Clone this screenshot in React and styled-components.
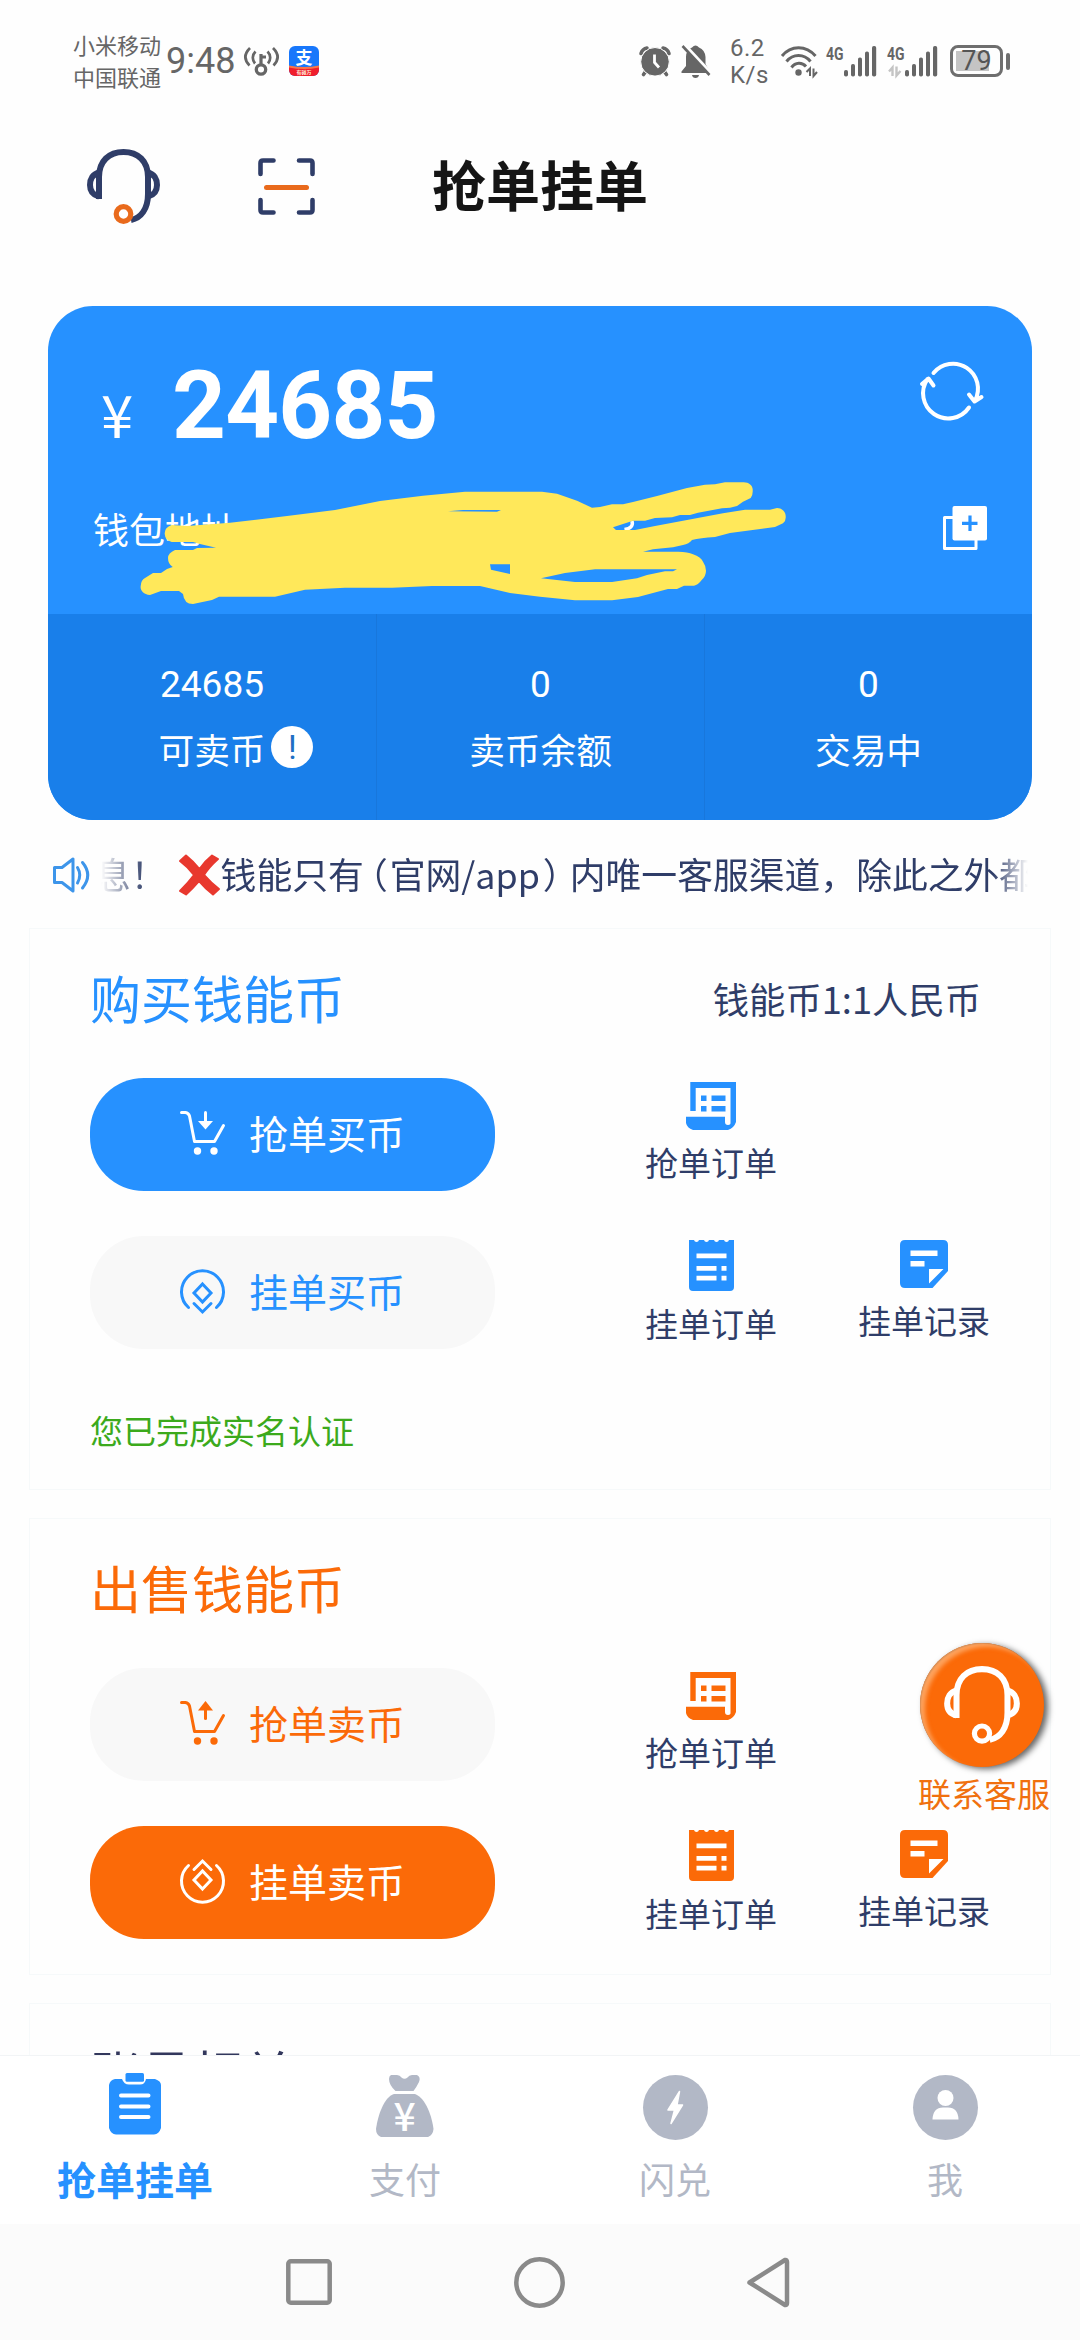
import React from 'react'
import styled, { createGlobalStyle } from 'styled-components'

const BLUE = '#2691ff'
const ORANGE = '#fb6a08'
const NAVY = '#2f3d68'
const GREY = '#b2b8c6'
const STATUS = '#666666'

const HeadsetIcon = ({ width, height, color, dot, stroke = 6 }) => (
  <svg width={width} height={height} viewBox="0 0 73 75" fill="none" stroke={color} strokeWidth={stroke}>
    <path d="M12 50V28C12 12 22 3 36.500 3S61 12 61 28V45C61 60 54 69 44 71" />
    <path d="M12 23.500C6 25 3 30 3 36S6 46 12 47.500" />
    <path d="M61 23.500C67 25 70 30 70 36S67 46 61 47.500" />
    <circle cx="36.500" cy="65" r="7.300" stroke={dot} strokeWidth={stroke - 0.8} />
  </svg>
)

const ScanIcon = () => (
  <svg width="57" height="57" viewBox="0 0 57 57" fill="none" strokeWidth="4.600" strokeLinecap="round">
    <path
      stroke={NAVY}
      strokeLinejoin="round"
      d="M2.500 16V5Q2.500 2.500 5 2.500H15.500M41 2.500H52Q54.500 2.500 54.500 5V16M54.500 42V52Q54.500 54.500 52 54.500H41M15.500 54.500H5Q2.500 54.500 2.500 52V42"
    />
    <path stroke="#e96a1c" strokeWidth="5" d="M8.500 29.500H48.500" />
  </svg>
)

const HotspotIcon = () => (
  <svg width="35" height="29" viewBox="0 0 35 29" fill="none" stroke={STATUS} strokeWidth="2.700">
    <circle cx="17" cy="22.500" r="4.700" strokeWidth="3.300" />
    <path d="M17 18V7M17 10H22" strokeWidth="3.200" />
    <path d="M11.500 4.500C8 8 8 13 11 16.500M6 1C0 7 0 13 5.500 18.500M23.500 4.500C27 8 27 13 24 16.500M29 1C35 7 35 13 29.500 18.500" />
  </svg>
)

const PayIcon = () => (
  <svg width="30" height="30" viewBox="0 0 30 30">
    <defs>
      <clipPath id="pay">
        <rect width="30" height="30" rx="6" />
      </clipPath>
    </defs>
    <g clipPath="url(#pay)">
      <rect width="30" height="30" fill="#1877fb" />
      <path d="M0 20Q15 23 30 20V30H0Z" fill="#f01e2c" />
      <path d="M0 19.500Q15 22.500 30 19.500V21.500Q15 24.500 0 21.500Z" fill="#f9764a" />
      <text x="15" y="17.500" textAnchor="middle" fontSize="17" fontWeight="700" fill="#fff">支</text>
      <text x="15" y="28" textAnchor="middle" fontSize="5" fontWeight="700" fill="#ffe9d8">有碰万</text>
    </g>
  </svg>
)

const AlarmIcon = () => (
  <svg width="32" height="31" viewBox="0 0 32 31">
    <g stroke={STATUS} strokeWidth="3.600" strokeLinecap="round" fill="none">
      <path d="M7 25L4.500 28.500M25 25L27.500 28.500" />
      <path d="M2 7.500C3 4.500 5 2.500 8 2M30 7.500C29 4.500 27 2.500 24 2" />
    </g>
    <circle cx="16" cy="15.800" r="14.300" fill={STATUS} stroke="#fff" strokeWidth="1" />
    <path d="M15.500 8.500V16.500L20 21.500" stroke="#fff" strokeWidth="2.800" fill="none" />
  </svg>
)

const BellOffIcon = () => (
  <svg width="30" height="33" viewBox="0 0 30 33">
    <path
      fill={STATUS}
      d="M11 2.500Q14.500 -1.500 18 2.500Q24 5 24.500 12V19L29 27V28H.5V26.500L5 21V12Q5 5 11 2.500ZM11 30H18Q17.500 33 14.500 33T11 30Z"
    />
    <path d="M3 0L30 29" stroke="#fff" strokeWidth="4.500" />
    <path d="M1.500 1L28.500 30" stroke={STATUS} strokeWidth="2.600" />
  </svg>
)

const WifiIcon = () => (
  <svg width="37" height="30" viewBox="0 0 37 30" fill="none" stroke={STATUS} strokeWidth="3">
    <path d="M1 10C10 -1 25 -1 34.500 10M5.500 15.500C12 7.500 23 7.500 29.500 15.500M10.500 21.500C14.500 16 21 16 25 20.500" />
    <circle cx="17.500" cy="26.500" r="3.200" fill={STATUS} stroke="none" />
    <path d="M29 30V22.500L25.500 26M32.500 22.500V30L36 26" strokeWidth="2" />
  </svg>
)

const SignalIcon = ({ idle }) => (
  <svg width="51" height="31" viewBox="0 0 51 31" fill={STATUS}>
    <text x="0" y="14" fontSize="18.500" fontWeight="700" textLength="17.500" lengthAdjust="spacingAndGlyphs" fontFamily="Roboto">4G</text>
    <rect x="18" y="24" width="4" height="6.500" rx="1.800" />
    <rect x="25" y="18" width="4" height="12.500" rx="1.800" />
    <rect x="32" y="11.500" width="4" height="19" rx="1.800" />
    <rect x="39" y="5.500" width="4" height="25" rx="1.800" />
    <rect x="46" y="0" width="4.200" height="30.500" rx="1.800" />
    {idle && <path d="M5.500 30V21.500L2 25.500M9.500 20.500V29.500L13.500 25" fill="none" stroke="#c4c4c4" strokeWidth="2.400" />}
  </svg>
)

const RefreshIcon = () => (
  <svg width="63" height="55" viewBox="0 0 63 55" fill="none" stroke="#fff" strokeWidth="4" strokeLinecap="round" strokeLinejoin="round">
    <path d="M13.500 10A25 25 0 0 1 55 37.500M49 31.500L54.500 38.500L61.500 34" />
    <path d="M49 44.500A25 25 0 0 1 7.500 16M2 21L8.500 15.500L13.500 22.500" />
  </svg>
)

const CopyIcon = () => (
  <svg width="44" height="44" viewBox="0 0 44 44">
    <path d="M10 11.500H1.500V42.500H33V34" fill="none" stroke="#fff" strokeWidth="3" strokeLinejoin="round" />
    <rect x="9.500" width="34.500" height="34.500" rx="2" fill="#fff" />
    <path d="M27 9.500V25M19 17.300H34.500" stroke={BLUE} strokeWidth="3.200" />
  </svg>
)

// hand drawn marker that covers the wallet address
const Marker = () => (
  <svg width="650" height="125" viewBox="140 480 650 125">
    <path d="M632 521Q634 528 624.500 529.500" fill="none" stroke="#fff" strokeWidth="3.500" />
    <path
      fill="#ffe85a"
      fillRule="evenodd"
      d="M171.700 525L187 526L230 522.700L287 516L335 510L380 501L423 495.700L465 491.700H542L557 493.700L577 500.700L592 507.700L600 507L612 504.300H623L633 502L657 496L687 488L705 484.700L715 484.300L725 482.300H743C749 482 753 486 752.700 490Q753 495 750.700 498L743 501.700L737 506L730 507.700L722 508.300L698 512.700L690 515H680L672 517.300L655 518L645 520.700H633L613 527.300L616 530H635L655 526L683 520.700L723 513.300L745 509.700H770L777 508C783 508 786 513 785.700 516.700Q786 521 783 523.300L775 527L747 530.700L730 533L715 537Q700 538 692 540Q689 544 683 545L673 547.300L653 549.300L643 551.700H678Q688 552 693 554.300Q701 557 703 561.700Q706 566 706 570.700Q706 576 701.700 580Q698 585 694 585.700H684L677 589H668L652 593.300L638 597L612 600.300H575L540 596.700L510 593L480 586H432L392 587.700H345L305 589.700L275 596.700H219L212 600L193 604Q184 604 183 594L179 591H161L150 595C143 594 140 590 140.700 586Q141 580 145 578L153 573H161L167 569L172.700 567Q168 564 168 558Q168 553 175 550H193L197 548L216 547.700L200 544L193 542H171.700Q165 540 164.700 533.700T171.700 525ZM448 511.300L463 510H501L497 511.700ZM490 564.300H510V574L491 569.700ZM541 578.300L565 573L595 569.300H677L673 571.300H665L647 575L637 578.300L612 582H575Z"
    />
  </svg>
)

const SpeakerIcon = () => (
  <svg width="39" height="36" viewBox="0 0 39 36" fill="none" stroke="#3d95ea" strokeWidth="3" strokeLinejoin="round">
    <path d="M1.500 10.500H9L20 2V34L9 25.500H1.500Z" />
    <path d="M24.500 10.500Q29 18 24.500 26M29.500 5.500Q40 18 29.500 31" strokeLinecap="round" />
  </svg>
)

const CrossMark = () => (
  <svg width="42" height="42" viewBox="0 0 42 42">
    <path
      fill="#e8382e"
      stroke="#e8382e"
      strokeWidth="2"
      strokeLinejoin="round"
      d="M2 7L8 1.500Q16 8 21.500 15Q27 7 34 1.500L40 5Q31 13 26 21Q33 29 41 35L35 40.500Q27 34 21 27Q15 34 8 40.500L2 37Q10 29 16 21Q10 13 2 7Z"
    />
  </svg>
)

const CartIcon = ({ up }) => (
  <svg width="45" height="45" viewBox="0 0 45 45" fill="none" stroke="currentColor" strokeWidth="3" strokeLinecap="round" strokeLinejoin="round">
    <path d="M1.500 1.500H5.500Q8.500 2 9.500 5L14.500 30.500H34.500L43.500 14.500" />
    <g fill="currentColor" stroke="none">
      <circle cx="17.500" cy="40" r="3.700" />
      <circle cx="34" cy="40" r="3.700" />
      <path d={up ? 'M25.500 0L33 9.500H18Z' : 'M25.500 18.500L33 10H18Z'} />
    </g>
    <path d={up ? 'M25.500 8V17.500' : 'M25.500 1.500V11'} />
  </svg>
)

const CoinIcon = ({ up }) => (
  <svg width="45" height="45" viewBox="0 0 45 45" fill="none" stroke="currentColor" strokeWidth="3" strokeLinecap="round">
    <g transform={up ? 'matrix(1 0 0 -1 0 45)' : undefined}>
      <path d="M8.500 38.500A21 21 0 1 1 36.500 38.500" />
      <path d="M22.500 15L31 24L22.500 33L14 24ZM14 34.500L22.500 43L31 34.500" />
    </g>
  </svg>
)

const ScrollIcon = () => (
  <svg width="50" height="48" viewBox="0 0 50 48" fill="currentColor">
    <path d="M4.300 0H50V40Q48 46 42 48H7Q1 46 0 41V34.800H39V40Q39 43 42 43T44.500 40V6H9.700V29H4.300Z" />
    <path d="M15 13.500h5.500v5.500h-5.500zM25.500 13.500h14v5.500h-14zM15 24h5.500v5.500h-5.500zM25.500 24h14v5.500h-14z" />
  </svg>
)

const ReceiptIcon = () => (
  <svg width="45" height="51" viewBox="0 0 45 51">
    <path
      fill="currentColor"
      d="M0 0H5A2.600 2.800 0 0 0 10 0H15A2.600 2.800 0 0 0 20 0H25A2.600 2.800 0 0 0 30 0H35A2.600 2.800 0 0 0 40 0H45V47Q45 51 41 51H4Q0 51 0 47Z"
    />
    <path fill="#fff" d="M7.500 13.500h30v4.700h-30zM7.500 26h20v4.700h-20zM32.500 26h5v4.700h-5zM7.500 35.800h20v4.700h-20zM32.500 35.800h5v4.700h-5z" />
  </svg>
)

const NoteIcon = () => (
  <svg width="48" height="48" viewBox="0 0 48 48">
    <path fill="currentColor" d="M5 0H43Q48 0 48 5V31L32.500 48H5Q0 48 0 43V5Q0 0 5 0Z" />
    <path fill="#fff" d="M10.500 10.500h27v5.500h-27zM10.500 21h14v5.500h-14zM29 29H43.500L29 43.500Z" />
  </svg>
)

const ClipboardIcon = () => (
  <svg width="52" height="62" viewBox="0 0 52 62">
    <path fill={BLUE} d="M6 6H13Q15 11.500 20 11.500H31Q36 11.500 37 6H46Q52 8 52 12V55Q50 61 45 61.500H7Q2 61 0 55V12Q1 7 6 6Z" />
    <rect x="16.500" y="0" width="18.500" height="8.800" rx="1.500" fill={BLUE} />
    <path stroke="#fff" strokeWidth="4" strokeLinecap="round" d="M12 22.500H39.500M12 33.500H39.500M12 44H39.500" />
  </svg>
)

const MoneyBagIcon = () => (
  <svg width="58" height="62" viewBox="0 0 58 62" fill={GREY}>
    <path d="M15 0H21Q24 0 25.500 2.500Q28.500 5 31.500 2.500Q33 0 36 0H41Q45 2 43 7Q40 13 37.500 16H19.500Q13 10 13 4Q13 1 15 0Z" />
    <path d="M18 19H39C50 23 56 42 57.500 54Q57 60 52 62H5Q0 60 0 54C2 40 8 22 18 19Z" />
    <text x="28.500" y="56" textAnchor="middle" fontSize="39" fontWeight="500" fill="#fff">¥</text>
  </svg>
)

const FlashIcon = () => (
  <svg width="65" height="65" viewBox="0 0 65 65">
    <circle cx="32.500" cy="32.500" r="32.500" fill={GREY} />
    <path fill="#fff" stroke="#fff" strokeWidth="1.500" strokeLinejoin="round" d="M36.500 16.500L25 35H31.500L28 48.500L39.500 30H34Z" />
  </svg>
)

const UserIcon = () => (
  <svg width="65" height="65" viewBox="0 0 65 65">
    <circle cx="32.500" cy="32.500" r="32.500" fill={GREY} />
    <circle cx="32.500" cy="23" r="8" fill="#fff" />
    <path fill="#fff" d="M19.500 44.500Q20 32.500 30 32.500H35Q45 32.500 45.500 44.500Z" />
  </svg>
)

const Pill = ({ tone, filled, icon, children }) => (
  <PillButton $tone={tone} $filled={filled}>
    {icon}
    <span>{children}</span>
  </PillButton>
)

const Shortcut = ({ tone, icon, children }) => (
  <ShortcutBox $tone={tone}>
    {icon}
    <span>{children}</span>
  </ShortcutBox>
)

const TradePanel = ({ tone, title, rate, verb, up, grab, note }) => (
  <Panel>
    <PanelHead $tone={tone}>
      <h2>{title}</h2>
      {rate && <span>{rate}</span>}
    </PanelHead>
    <TradeRow>
      <Pill tone={tone} filled={grab} icon={<CartIcon up={up} />}>抢单{verb}币</Pill>
      <Shortcuts>
        <Shortcut tone={tone} icon={<ScrollIcon />}>抢单订单</Shortcut>
      </Shortcuts>
    </TradeRow>
    <TradeRow>
      <Pill tone={tone} filled={!grab} icon={<CoinIcon up={up} />}>挂单{verb}币</Pill>
      <Shortcuts>
        <Shortcut tone={tone} icon={<ReceiptIcon />}>挂单订单</Shortcut>
        <Shortcut tone={tone} icon={<NoteIcon />}>挂单记录</Shortcut>
      </Shortcuts>
    </TradeRow>
    {note && <Verified>{note}</Verified>}
  </Panel>
)

const App = () => {
  return (
    <Screen>
      <GlobalStyle />
      <StatusBar>
        <Carrier>
          <span>小米移动</span>
          <span>中国联通</span>
        </Carrier>
        <Clock>9:48</Clock>
        <HotspotIcon />
        <PayIcon />
        <StatusRight>
          <AlarmIcon />
          <BellOffIcon />
          <Speed>
            <span>6.2</span>
            <span>K/s</span>
          </Speed>
          <WifiIcon />
          <SignalIcon />
          <SignalIcon idle />
          <Battery>
            <div>79</div>
          </Battery>
        </StatusRight>
      </StatusBar>

      <Header>
        <HeaderIcons>
          <HeadsetIcon width={73} height={75} color={NAVY} dot="#e96a1c" />
          <ScanIcon />
        </HeaderIcons>
        <h1>抢单挂单</h1>
        <div />
      </Header>

      <Content>
        <Wallet>
          <Balance>
            <small>¥</small>
            <strong>24685</strong>
            <RefreshIcon />
          </Balance>
          <Address>
            <span>钱包地址</span>
            <CopyIcon />
            <Scribble>
              <Marker />
            </Scribble>
          </Address>
          <Stats>
            <Stat>
              <b>24685</b>
              <span>
                可卖币<Tip>!</Tip>
              </span>
            </Stat>
            <Stat>
              <b>0</b>
              <span>卖币余额</span>
            </Stat>
            <Stat>
              <b>0</b>
              <span>交易中</span>
            </Stat>
          </Stats>
        </Wallet>

        <Notice>
          <SpeakerIcon />
          <Marquee>
            <span>息！</span>
            <CrossMark />
            <span>钱能只有</span>
            <Paren $before={6} $after={2}>（</Paren>
            <span>官网/app</span>
            <Paren $before={3} $after={9}>）</Paren>
            <span>内唯一客服渠道，除此之外都</span>
          </Marquee>
        </Notice>

        <TradePanel tone={BLUE} title="购买钱能币" rate="钱能币1:1人民币" verb="买" grab note="您已完成实名认证" />
        <TradePanel tone={ORANGE} title="出售钱能币" verb="卖" up />
        <Panel>
          <PanelHead $tone="#32375c">
            <h2>账号相关</h2>
          </PanelHead>
        </Panel>
      </Content>

      <Support>
        <Bubble>
          <HeadsetIcon width={76} height={78} color="#fff" dot="#fff" stroke={5.8} />
        </Bubble>
        <span>联系客服</span>
      </Support>

      <TabBar>
        <Tab $active>
          <ClipboardIcon />
          <span>抢单挂单</span>
        </Tab>
        <Tab>
          <MoneyBagIcon />
          <span>支付</span>
        </Tab>
        <Tab>
          <FlashIcon />
          <span>闪兑</span>
        </Tab>
        <Tab>
          <UserIcon />
          <span>我</span>
        </Tab>
      </TabBar>

      <SystemNav>
        <svg width="46" height="46" viewBox="0 0 46 46" fill="none" stroke="#8a8a8a" strokeWidth="4.500">
          <rect x="2.300" y="2.300" width="41.400" height="41.400" rx="2.500" />
        </svg>
        <svg width="51" height="51" viewBox="0 0 51 51" fill="none" stroke="#8a8a8a" strokeWidth="4.500">
          <circle cx="25.500" cy="25.500" r="23.200" />
        </svg>
        <svg width="44" height="51" viewBox="0 0 44 51" fill="none" stroke="#8a8a8a" strokeWidth="4.500" strokeLinejoin="round">
          <path d="M3.500 25.500L39 3Q41 2.500 41 5V46Q41 48.500 39 48Z" />
        </svg>
      </SystemNav>
    </Screen>
  )
}

export default App

const GlobalStyle = createGlobalStyle`
  * {
    box-sizing: border-box;
  }

  body {
    margin: 0;
    background: #fefefe;
    font-family: "Noto Sans CJK SC", sans-serif;
  }

  h1, h2 {
    margin: 0;
    font-weight: 400;
  }

  svg {
    display: block;
    flex-shrink: 0;
    overflow: visible;
  }
`

const Screen = styled.div`
  position: relative;
  display: flex;
  flex-direction: column;
  width: 1080px;
  height: 2340px;
  overflow: hidden;
  background: #fefefe;
  white-space: nowrap;
`

const StatusBar = styled.div`
  display: flex;
  align-items: center;
  height: 122px;
  padding: 0 70px 0 73px;
  color: ${STATUS};

  svg + svg {
    margin-left: 10px;
  }
`

const Carrier = styled.div`
  display: flex;
  flex-direction: column;
  font-size: 22px;
  line-height: 32px;
  margin-top: -3px;
`

const Clock = styled.div`
  width: 70px;
  margin: 0 8px 0 5px;
  font-family: Roboto, sans-serif;
  font-size: 36px;
  line-height: 40px;
`

const StatusRight = styled.div`
  display: flex;
  align-items: center;
  margin-left: auto;

  svg + svg + svg {
    margin-left: 10px;
  }

  div + svg + svg {
    margin-left: 8px;
  }
`

const Speed = styled.div`
  display: flex;
  flex-direction: column;
  width: 36px;
  margin: 2px 15px 0 19px;
  font-family: Roboto, sans-serif;
  font-size: 24px;
  line-height: 27px;
  letter-spacing: 0.5px;
`

const Battery = styled.div`
  display: flex;
  align-items: center;
  margin-left: 12px;

  div {
    width: 53px;
    height: 32px;
    border: 3px solid #6e6e6e;
    border-radius: 8px;
    background: linear-gradient(#c4c4c4, #c4c4c4) 3px 3px / 33px 20px no-repeat;
    font-family: Roboto, sans-serif;
    font-size: 27px;
    line-height: 27px;
    text-align: center;
    color: #555;
  }

  &::after {
    content: '';
    width: 4px;
    height: 17px;
    margin-left: 3px;
    border-radius: 2px;
    background: #6e6e6e;
  }
`

const Header = styled.header`
  display: grid;
  grid-template-columns: 1fr auto 1fr;
  align-items: center;
  height: 129px;

  h1 {
    font-size: 54px;
    line-height: 70px;
    font-weight: 700;
    color: #151515;
    margin-top: -6px;
  }
`

const HeaderIcons = styled.div`
  display: flex;
  align-items: center;
  gap: 98px;
  padding-left: 87px;
`

const Content = styled.main`
  flex: 1;
  overflow: hidden;
  padding-top: 55px;
`

const Wallet = styled.section`
  display: flex;
  flex-direction: column;
  height: 514px;
  margin: 0 48px;
  border-radius: 45px;
  background: ${BLUE};
  color: #fff;
`

const Balance = styled.div`
  display: flex;
  align-items: baseline;
  height: 180px;
  padding: 55px 49px 0 53px;

  small {
    width: 71px;
    font-size: 58px;
    line-height: 90px;
    font-weight: 400;
  }

  strong {
    flex: 1;
    font-family: Roboto, sans-serif;
    font-size: 94px;
    line-height: 90px;
    font-weight: 700;
    letter-spacing: -0.8px;
  }

  svg {
    align-self: flex-start;
    margin-top: 2px;
  }
`

const Address = styled.div`
  position: relative;
  display: flex;
  align-items: center;
  justify-content: space-between;
  height: 128px;
  padding: 0 45px 45px 45px;
  font-size: 36px;
`

const Scribble = styled.div`
  position: absolute;
  left: 92px;
  top: -6px;
`

const Stats = styled.div`
  display: grid;
  grid-template-columns: repeat(3, 1fr);
  flex: 1;
  border-radius: 0 0 45px 45px;
  background: #197fea;
`

const Stat = styled.div`
  display: flex;
  flex-direction: column;
  align-items: center;
  padding-top: 48px;

  & + & {
    border-left: 1px solid #1877dc;
  }

  b {
    font-family: Roboto, sans-serif;
    font-size: 37px;
    line-height: 46px;
    font-weight: 400;
  }

  span {
    position: relative;
    margin-top: 16px;
    font-size: 35.7px;
    line-height: 50px;
  }
`

const Tip = styled.i`
  position: absolute;
  left: 113px;
  top: 2px;
  width: 42px;
  height: 42px;
  border-radius: 50%;
  background: #fff;
  color: #1f6fc4;
  font-family: Roboto, sans-serif;
  font-style: normal;
  font-size: 34px;
  line-height: 42px;
  text-align: center;
`

const Notice = styled.div`
  display: flex;
  align-items: center;
  gap: 9px;
  height: 108px;
  padding: 2px 52px 0 53px;
  font-size: 35.8px;
  color: ${NAVY};
`

const Marquee = styled.div`
  flex: 1;
  display: flex;
  align-items: center;
  overflow: hidden;
  mask-image: linear-gradient(90deg, transparent, #000 45px, #000 calc(100% - 35px), transparent);

  span {
    margin-top: -4px;
  }

  span:first-child {
    margin-right: 11px;
    margin-left: -6px;
  }

  svg {
    margin-right: 1px;
  }
`

const Paren = styled.span`
  margin-left: ${(p) => p.$before}px;
  margin-right: ${(p) => p.$after}px;
  font-feature-settings: 'halt';
`

const Panel = styled.section`
  margin: 0 29px 28px;
  padding: 0 60px 35px;
  border: 1px solid #f6f9fa;
`

const PanelHead = styled.div`
  display: flex;
  align-items: center;
  justify-content: space-between;
  height: 149px;
  padding: 0 9px 13px 0;

  h2 {
    font-size: 51px;
    line-height: 60px;
    color: ${(p) => p.$tone};
  }

  span {
    font-size: 36.300px;
    padding-top: 2px;
    color: ${NAVY};
  }
`

const TradeRow = styled.div`
  display: flex;
  height: 113px;

  & + & {
    margin-top: 45px;
  }
`

const PillButton = styled.button`
  display: flex;
  align-items: center;
  gap: 24px;
  width: 405px;
  padding: 0 0 2px 90px;
  border: 0;
  border-radius: 54px;
  background: ${(p) => (p.$filled ? p.$tone : '#f8f8f8')};
  color: ${(p) => (p.$filled ? '#fff' : p.$tone)};
  font-family: inherit;
  font-size: 39px;
  line-height: 50px;

  span {
    margin-top: -4px;
  }
`

const Shortcuts = styled.div`
  display: flex;
  gap: 81px;
  margin-left: 150px;
`

const ShortcutBox = styled.div`
  display: flex;
  flex-direction: column;
  align-items: center;
  gap: 10px;
  padding-top: 4px;
  color: ${(p) => p.$tone};

  span {
    font-size: 33px;
    line-height: 44px;
    color: ${NAVY};
  }
`

const Verified = styled.p`
  margin: 58px 0 1px;
  font-size: 33px;
  line-height: 46px;
  color: #3caa1c;
`

const Support = styled.div`
  position: absolute;
  right: 30px;
  top: 1643px;
  display: flex;
  flex-direction: column;
  align-items: center;
  font-size: 33px;
  line-height: 44px;
  color: #f0700f;

  span {
    margin-top: 4px;
  }
`

const Bubble = styled.div`
  display: grid;
  place-items: center;
  width: 124px;
  height: 124px;
  margin-right: 4px;
  border-radius: 50%;
  background: ${ORANGE};
  box-shadow: 4px 2px 6px rgba(0, 0, 0, 0.6), inset 5px 4px 4px rgba(255, 200, 150, 0.6), inset 1px 1px 1px rgba(120, 50, 0, 0.6);
`

const TabBar = styled.nav`
  display: grid;
  grid-template-columns: repeat(4, 1fr);
  height: 169px;
  border-top: 1px solid #f2f4f6;
  background: #fff;
`

const Tab = styled.div`
  display: flex;
  flex-direction: column;
  align-items: center;
  justify-content: space-between;
  padding: ${(p) => (p.$active ? '17px 0 21px' : '19px 0 21px')};
  color: ${(p) => (p.$active ? BLUE : GREY)};
  font-size: ${(p) => (p.$active ? 39 : 36)}px;
  font-weight: ${(p) => (p.$active ? 700 : 400)};
  line-height: 50px;
`

const SystemNav = styled.footer`
  display: flex;
  align-items: center;
  justify-content: center;
  gap: 181.5px;
  height: 116px;
  padding-right: 4px;
  background: #fbfbfb;
`
